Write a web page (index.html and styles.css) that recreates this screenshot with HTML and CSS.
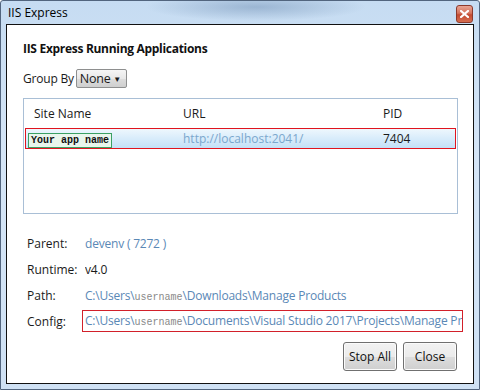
FILE: index.html
```html
<!DOCTYPE html>
<html lang="en">
<head>
    <meta charset="UTF-8">
    <title>IIS Express</title>
    <link rel="stylesheet" href="styles.css">
</head>
<body>
    <div class="window">
        <div class="titlebar">
            <span class="title">IIS Express</span>
            <span class="close-btn">
                <svg width="9" height="8" viewBox="0 0 9 8">
                    <path d="M1 1 L8 7 M8 1 L1 7" stroke="#fff" stroke-width="2.2" stroke-linecap="square"/>
                </svg>
            </span>
        </div>

        <div class="client">
            <h1>IIS Express Running Applications</h1>

            <div class="group-by">
                <span>Group By</span>
                <div class="select">None <span class="arrow">&#9660;</span></div>
            </div>

            <div class="list">
                <div class="list-head">
                    <span class="col-name">Site Name</span>
                    <span class="col-url">URL</span>
                    <span class="col-pid">PID</span>
                </div>
                <div class="list-row selected">
                    <span class="col-name"><span class="app-name">Your app name</span></span>
                    <span class="col-url link-light">http://localhost:2041/</span>
                    <span class="col-pid">7404</span>
                </div>
            </div>

            <div class="details">
                <span class="label">Parent:</span>
                <span class="value link">devenv ( 7272 )</span>

                <span class="label">Runtime:</span>
                <span class="value">v4.0</span>

                <span class="label">Path:</span>
                <span class="value link">C:\Users\<span class="user">username</span>\Downloads\Manage Products</span>

                <span class="label">Config:</span>
                <span class="value link config">C:\Users\<span class="user">username</span>\Documents\Visual Studio 2017\Projects\Manage Pr</span>
            </div>

            <div class="actions">
                <button>Stop All</button>
                <button>Close</button>
            </div>
        </div>
    </div>
</body>
</html>
```

FILE: styles.css
```css
body {
    margin: 0;
    font-family: "Open Sans", "Noto Sans", sans-serif;
    font-size: 11.5px;
    color: #1a1a1a;
}

.window {
    width: 480px;
    height: 390px;
    box-sizing: border-box;
    border: 1px solid #52657e;
    border-radius: 3px 3px 0 0;
    background:
        radial-gradient(ellipse 110px 14px at 255px 6px, rgba(120, 150, 185, 0.55), transparent),
        linear-gradient(to bottom, #c6dcf2 0%, #d5e5f6 40%, #cfe1f4 100%);
    padding: 0 5px 5px 5px;
}

.titlebar {
    height: 23px;
    display: flex;
    align-items: center;
    justify-content: space-between;
    padding-left: 2px;
}

.title {
    font-size: 12px;
    color: #000;
}

.close-btn {
    width: 15px;
    height: 16px;
    margin-top: 3px;
    margin-right: 1px;
    border: 1px solid #8c3a2c;
    border-radius: 3px;
    background: linear-gradient(to bottom, #e8a493 0%, #d4735c 45%, #c24a30 55%, #d66e50 100%);
    display: flex;
    align-items: center;
    justify-content: center;
}

.client {
    height: 360px;
    box-sizing: border-box;
    border: 1px solid #111;
    background: #fff;
    padding: 15px 15px 0 16px;
}

h1 {
    margin: 0;
    font-size: 12px;
    font-weight: bold;
    line-height: 18px;
    color: #111;
    letter-spacing: -0.3px;
}

.group-by {
    display: flex;
    align-items: center;
    margin-top: 10px;
    height: 20px;
    font-size: 12px;
    letter-spacing: -0.2px;
}

.select {
    margin-left: 2px;
    height: 19px;
    width: 51px;
    box-sizing: border-box;
    border: 1px solid #8e8f8f;
    border-radius: 2px;
    background: linear-gradient(to bottom, #f5f5f5 0%, #e8e8e8 50%, #dcdcdc 51%, #cfcfcf 100%);
    padding-left: 3px;
    display: flex;
    align-items: center;
    justify-content: space-between;
    font-size: 12.5px;
}

.arrow {
    font-size: 8px;
    margin-right: 5px;
}

.list {
    margin-top: 10px;
    height: 116px;
    box-sizing: border-box;
    border: 1px solid #a9bfd6;
    padding: 0 1px;
}

.list-head,
.list-row {
    display: flex;
    align-items: center;
}

.list-head {
    height: 29px;
    font-size: 12px;
}

.col-name {
    width: 158px;
    padding-left: 9px;
    box-sizing: border-box;
}

.col-url {
    width: 200px;
}

.list-row {
    height: 21px;
    box-sizing: border-box;
    font-size: 12px;
}

.list-row.selected {
    border: 1px solid #e0141e;
    background: linear-gradient(to bottom, #eef7fd 0%, #d8ecfb 50%, #c3e1f7 100%);
}

.list-row .col-name {
    width: 157px;
    padding-left: 2px;
}

.app-name {
    display: inline-block;
    border: 1px solid #3aa063;
    background: #e9f6ec;
    font-family: "Liberation Mono", monospace;
    font-weight: bold;
    font-size: 10px;
    line-height: 13px;
    padding: 0 2px;
    color: #111;
}

.link {
    color: #5a88b6;
}

.link-light {
    color: #7ba7cd;
}

.details {
    display: grid;
    grid-template-columns: 58px 1fr;
    grid-auto-rows: 26px;
    align-items: center;
    margin-top: 16px;
    margin-left: 4px;
    font-size: 12px;
}

.value {
    white-space: nowrap;
    overflow: hidden;
    letter-spacing: -0.2px;
}

.user {
    font-family: "Liberation Mono", monospace;
    font-size: 10px;
    color: #8a8a8a;
    letter-spacing: 0;
}

.value.config {
    margin-left: -3px;
    margin-right: -5px;
    padding-left: 2px;
    height: 22px;
    line-height: 20px;
    box-sizing: border-box;
    border: 1px solid #d2202a;
}

.actions {
    display: flex;
    justify-content: flex-end;
    gap: 6px;
    margin-top: 8px;
    margin-right: 1px;
}

button {
    width: 54px;
    height: 29px;
    font-family: inherit;
    font-size: 12px;
    color: #111;
    border: 1px solid #707070;
    border-radius: 3px;
    background: linear-gradient(to bottom, #f2f2f2 0%, #ebebeb 50%, #dddddd 51%, #cfcfcf 100%);
    box-shadow: inset 0 0 0 1px #fbfbfb;
    padding: 0;
}
```
